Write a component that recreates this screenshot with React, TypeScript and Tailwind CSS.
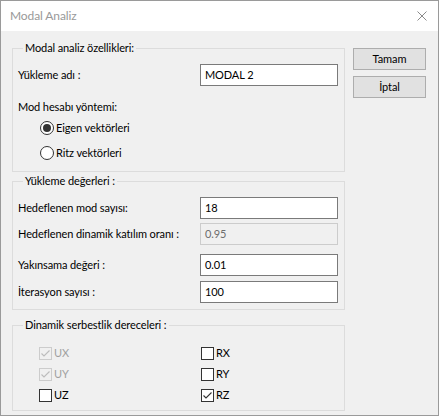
import React from 'react';

const font = { fontFamily: 'Lato, "Liberation Sans", Arial, sans-serif' };

const Check = ({ color }: { color: string }) => (
  <svg viewBox="0 0 11 11" className="w-[11px] h-[11px]">
    <polyline points="1.5,5.5 4,8 9.5,2.5" fill="none" stroke={color} strokeWidth="1.1" />
  </svg>
);

const CheckBox = ({ label, checked, disabled }: { label: string; checked?: boolean; disabled?: boolean }) => (
  <div className="flex items-center h-[20px]">
    <span
      className={`w-[13px] h-[13px] border flex items-center justify-center ${
        disabled ? 'border-[#cccccc] bg-[#f0f0f0]' : 'border-[#333333] bg-white'
      }`}
    >
      {checked && <Check color={disabled ? '#bcbcbc' : '#333333'} />}
    </span>
    <span className={`ml-[2px] ${disabled ? 'text-[#a0a0a0]' : 'text-black'}`}>{label}</span>
  </div>
);

const Radio = ({ label, checked }: { label: string; checked?: boolean }) => (
  <div className="flex items-center h-[16px] pl-[22px]">
    <span className="w-[14px] h-[14px] rounded-full border border-[#333333] bg-white flex items-center justify-center">
      {checked && <span className="w-[8px] h-[8px] rounded-full bg-[#333333]" />}
    </span>
    <span className="ml-[2px]">{label}</span>
  </div>
);

const Field = ({ label, value, disabled, className = '' }: { label: string; value: string; disabled?: boolean; className?: string }) => (
  <div className={`flex items-center justify-between pr-[6px] ${className}`}>
    <span className="whitespace-nowrap">{label}</span>
    <div
      className={`w-[138px] h-[22px] border flex items-center pl-[4px] ${
        disabled ? 'border-[#cccccc] bg-[#f0f0f0] text-[#6d6d6d]' : 'border-[#7a7a7a] bg-white text-black'
      }`}
    >
      {value}
    </div>
  </div>
);

const Group = ({ title, children, className = '' }: { title: string; children: React.ReactNode; className?: string }) => (
  <fieldset className={`border border-[#dcdcdc] pl-[5px] ${className}`}>
    <legend className="ml-[5px] px-[2px] leading-[14px]">{title}</legend>
    {children}
  </fieldset>
);

const Button = ({ label, className = '' }: { label: string; className?: string }) => (
  <button className={`w-[73px] h-[22px] bg-[#e1e1e1] border border-[#adadad] text-black ${className}`}>
    {label}
  </button>
);

export default function App() {
  return (
    <div
      className="w-[439px] h-[416px] border border-[#9a9a9a] bg-[#f0f0f0] text-[11px] tracking-[-0.1px] text-black flex flex-col"
      style={font}
    >
      {/* title bar */}
      <div className="h-[30px] bg-white flex items-center justify-between pl-[9px] pr-[11px] shrink-0">
        <span className="text-[#999999] text-[12px]">Modal Analiz</span>
        <svg viewBox="0 0 10 10" className="w-[10px] h-[10px]">
          <path d="M0.5 0.5 L9.5 9.5 M9.5 0.5 L0.5 9.5" stroke="#8a8a8a" strokeWidth="1" />
        </svg>
      </div>

      <div className="flex pl-[11px] pt-[10px]">
        <div className="w-[333px] flex flex-col">
          <Group title="Modal analiz özellikleri:" className="pb-[10px]">
            <Field label="Yükleme adı :" value="MODAL 2" className="mt-[9px]" />
            <div className="mt-[13px] h-[16px] flex items-center">Mod hesabı yöntemi:</div>
            <div className="mt-[5px]">
              <Radio label="Eigen vektörleri" checked />
            </div>
            <div className="mt-[9px]">
              <Radio label="Ritz vektörleri" />
            </div>
          </Group>

          <Group title="Yükleme değerleri :" className="mt-[2px] pb-[6px]">
            <Field label="Hedeflenen mod sayısı:" value="18" className="mt-[9px]" />
            <Field label="Hedeflenen dinamik katılım oranı :" value="0.95" disabled className="mt-[4px]" />
            <Field label="Yakınsama değeri :" value="0.01" className="mt-[9px]" />
            <Field label="İterasyon sayısı :" value="100" className="mt-[5px]" />
          </Group>

          <Group title="Dinamik serbestlik dereceleri :" className="mt-[8px] pb-[5px]">
            <div className="mt-[11px] grid grid-cols-[162px_1fr] pl-[21px] gap-y-[1px]">
              <CheckBox label="UX" checked disabled />
              <CheckBox label="RX" />
              <CheckBox label="UY" checked disabled />
              <CheckBox label="RY" />
              <CheckBox label="UZ" />
              <CheckBox label="RZ" checked />
            </div>
          </Group>
        </div>

        <div className="ml-[8px] pt-[7px] flex flex-col gap-[6px]">
          <Button label="Tamam" />
          <Button label="İptal" />
        </div>
      </div>
    </div>
  );
}
